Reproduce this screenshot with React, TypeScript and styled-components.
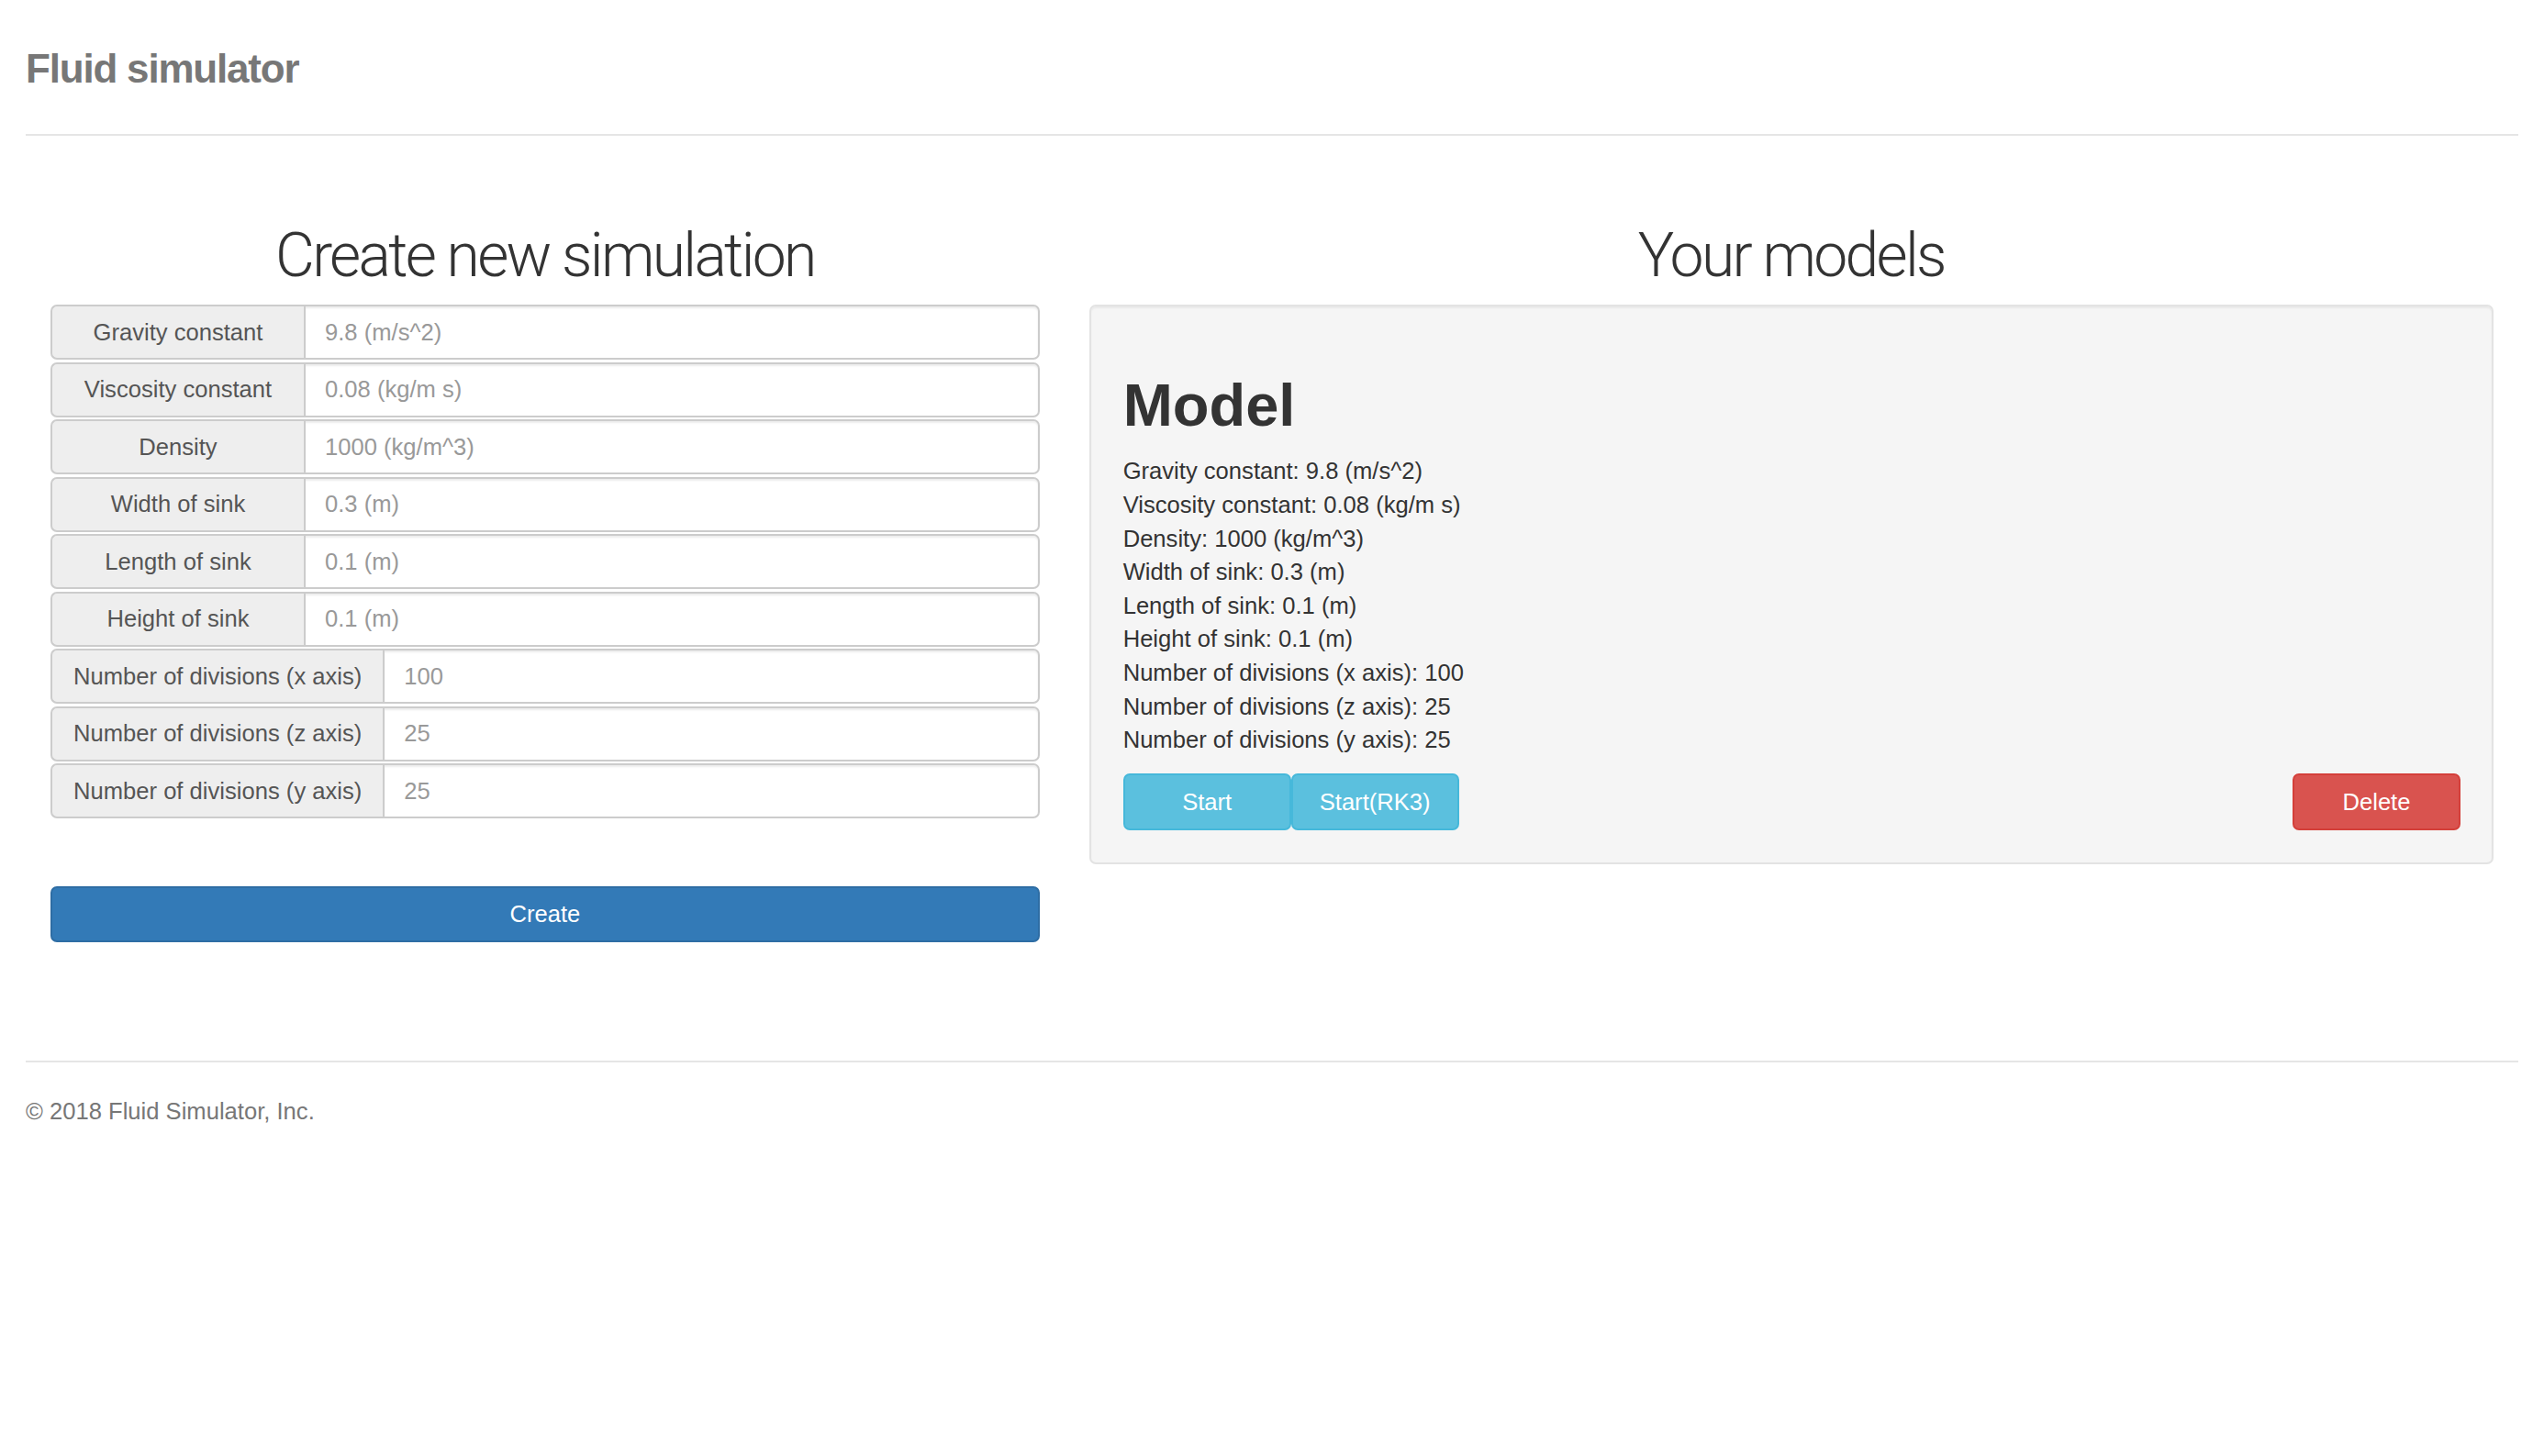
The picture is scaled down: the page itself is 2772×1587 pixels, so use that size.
import React from "react";
import styled, { createGlobalStyle } from "styled-components";

const GlobalStyle = createGlobalStyle`
  html, body {
    margin: 0;
    padding: 0;
    background: #ffffff;
  }
  body {
    font-family: "Liberation Sans", Arial, Helvetica, sans-serif;
    font-size: 25.6px;
    line-height: 36.6px;
    color: #333333;
  }
  * { box-sizing: border-box; }
`;

const Page = styled.div`
  padding: 38px 28px 36px;
`;

const Header = styled.header`
  padding-bottom: 35px;
  border-bottom: 2px solid #e5e5e5;
`;

const Brand = styled.h3`
  margin: 0;
  font-size: 44px;
  line-height: 73px;
  font-weight: 700;
  color: #777777;
  letter-spacing: -1.2px;
`;

const Main = styled.main`
  display: grid;
  grid-template-columns: 5fr 7fr;
  align-items: start;
  margin-top: 95px;
`;

const Column = styled.section`
  padding: 0 27px;
  min-width: 0;
`;

const SectionTitle = styled.h1`
  margin: 0 0 17px;
  font-family: "Roboto Light", Roboto, "Liberation Sans", sans-serif;
  font-weight: 300;
  font-size: 66px;
  line-height: 72px;
  text-align: center;
  color: #333333;
  letter-spacing: -2.7px;
`;

const FieldList = styled.div`
  display: flex;
  flex-direction: column;
  gap: 2.5px;
`;

const InputGroup = styled.label`
  display: flex;
  height: 60px;
`;

const Addon = styled.span<{ $width?: number }>`
  flex: 0 0 auto;
  width: ${(p) => (p.$width ? `${p.$width}px` : "auto")};
  padding: 0 23px;
  display: flex;
  align-items: center;
  justify-content: center;
  white-space: nowrap;
  background: #eeeeee;
  color: #555555;
  border: 2px solid #cccccc;
  border-right: none;
  border-radius: 7px 0 0 7px;
`;

const Field = styled.input`
  flex: 1 1 auto;
  min-width: 0;
  height: 60px;
  padding: 0 21px;
  font: inherit;
  color: #555555;
  background: #ffffff;
  border: 2px solid #cccccc;
  border-radius: 0 7px 7px 0;
  box-shadow: inset 0 2px 2px rgba(0, 0, 0, 0.075);
  outline: none;
  &::placeholder {
    color: #999999;
    opacity: 1;
  }
`;

const Button = styled.button<{ $variant: "primary" | "info" | "danger"; $block?: boolean }>`
  display: inline-flex;
  align-items: center;
  justify-content: center;
  height: ${(p) => (p.$block ? 61 : 62)}px;
  width: ${(p) => (p.$block ? "100%" : "183px")};
  padding: 0 22px;
  font: inherit;
  color: #ffffff;
  border-radius: 7px;
  cursor: pointer;
  background: ${(p) =>
    p.$variant === "primary" ? "#337ab7" : p.$variant === "info" ? "#5bc0de" : "#d9534f"};
  border: 2px solid
    ${(p) =>
      p.$variant === "primary" ? "#2e6da4" : p.$variant === "info" ? "#46b8da" : "#d43f3a"};
`;

const CreateRow = styled.div`
  margin-top: 74px;
`;

const Well = styled.div`
  background: #f5f5f5;
  border: 2px solid #e3e3e3;
  border-radius: 7px;
  padding: 35px 34px 35px 35px;
  box-shadow: inset 0 2px 2px rgba(0, 0, 0, 0.05);
`;

const ModelTitle = styled.h1`
  margin: 36.6px 0 18.3px;
  font-size: 65px;
  line-height: 71.5px;
  font-weight: 700;
  color: #333333;
`;

const Details = styled.div`
  display: flex;
  flex-direction: column;
`;

const DetailLine = styled.div`
  line-height: 36.6px;
`;

const Actions = styled.div`
  margin-top: 18.5px;
  display: flex;
  justify-content: space-between;
  align-items: center;
`;

const ButtonPair = styled.div`
  display: flex;
`;

const Footer = styled.footer`
  margin-top: 129px;
  border-top: 2px solid #e5e5e5;
  padding-top: 35px;
  color: #777777;
`;

type FieldDef = { label: string; placeholder: string; width?: number };

const fields: FieldDef[] = [
  { label: "Gravity constant", placeholder: "9.8 (m/s^2)", width: 276 },
  { label: "Viscosity constant", placeholder: "0.08 (kg/m s)", width: 276 },
  { label: "Density", placeholder: "1000 (kg/m^3)", width: 276 },
  { label: "Width of sink", placeholder: "0.3 (m)", width: 276 },
  { label: "Length of sink", placeholder: "0.1 (m)", width: 276 },
  { label: "Height of sink", placeholder: "0.1 (m)", width: 276 },
  { label: "Number of divisions (x axis)", placeholder: "100" },
  { label: "Number of divisions (z axis)", placeholder: "25" },
  { label: "Number of divisions (y axis)", placeholder: "25" },
];

const modelLines = [
  "Gravity constant: 9.8 (m/s^2)",
  "Viscosity constant: 0.08 (kg/m s)",
  "Density: 1000 (kg/m^3)",
  "Width of sink: 0.3 (m)",
  "Length of sink: 0.1 (m)",
  "Height of sink: 0.1 (m)",
  "Number of divisions (x axis): 100",
  "Number of divisions (z axis): 25",
  "Number of divisions (y axis): 25",
];

export default function App() {
  return (
    <>
      <GlobalStyle />
      <Page>
        <Header>
          <Brand>Fluid simulator</Brand>
        </Header>
        <Main>
          <Column>
            <SectionTitle>Create new simulation</SectionTitle>
            <FieldList>
              {fields.map((f) => (
                <InputGroup key={f.label}>
                  <Addon $width={f.width}>{f.label}</Addon>
                  <Field type="text" placeholder={f.placeholder} />
                </InputGroup>
              ))}
            </FieldList>
            <CreateRow>
              <Button $variant="primary" $block>
                Create
              </Button>
            </CreateRow>
          </Column>
          <Column>
            <SectionTitle>Your models</SectionTitle>
            <Well>
              <ModelTitle>Model</ModelTitle>
              <Details>
                {modelLines.map((l) => (
                  <DetailLine key={l}>{l}</DetailLine>
                ))}
              </Details>
              <Actions>
                <ButtonPair>
                  <Button $variant="info">Start</Button>
                  <Button $variant="info">Start(RK3)</Button>
                </ButtonPair>
                <Button $variant="danger">Delete</Button>
              </Actions>
            </Well>
          </Column>
        </Main>
        <Footer>© 2018 Fluid Simulator, Inc.</Footer>
      </Page>
    </>
  );
}
